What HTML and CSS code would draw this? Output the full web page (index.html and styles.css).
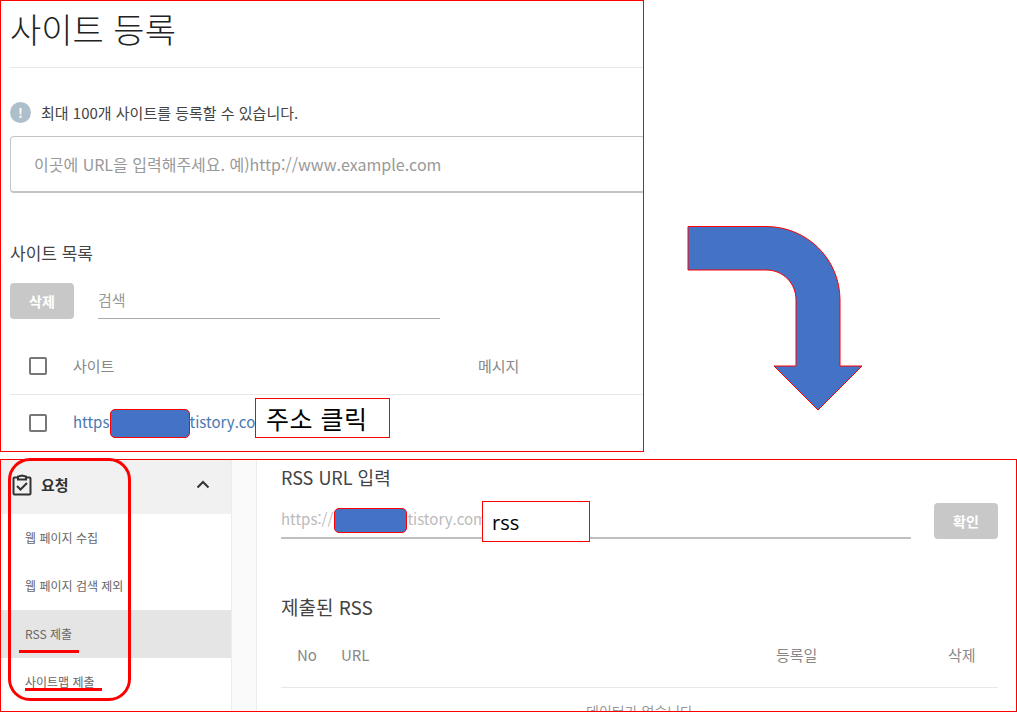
FILE: index.html
```html
<!DOCTYPE html>
<html lang="ko">
<head>
<meta charset="utf-8">
<title>RSS 제출 안내</title>
<link rel="stylesheet" href="styles.css">
</head>
<body>
<div class="sheet">
  <section class="site-panel">
    <h1 class="site-title">사이트 등록</h1>
    <div class="notice">
      <span class="notice-icon">!</span>
      <span>최대 100개 사이트를 등록할 수 있습니다.</span>
    </div>
    <div class="url-field">이곳에 URL을 입력해주세요. 예)http://www.example.com</div>
    <h2 class="list-title">사이트 목록</h2>
    <div class="list-tools">
      <button class="btn">삭제</button>
      <div class="search">검색</div>
    </div>
    <div class="site-row site-head">
      <span class="checkbox"></span>
      <span class="col-site">사이트</span>
      <span>메시지</span>
    </div>
    <div class="site-row site-item">
      <span class="checkbox"></span>
      <a class="site-link">https:<span class="redact redact-link"></span>tistory.com</a>
    </div>
    <div class="callout callout-click">주소 클릭</div>
  </section>

  <svg class="turn-arrow" width="180" height="190" viewBox="0 0 180 190">
    <path d="M1 1.500H79C120 1.500 153 34 153 75V141H175L131 185L87 141H109V75C109 58 96 45 79 45H1Z" fill="#4472c4" stroke="#f00" stroke-width="1"/>
  </svg>

  <section class="rss-panel">
    <nav class="side">
      <div class="side-head">
        <svg class="side-icon" width="20" height="22" viewBox="0 0 20 22">
          <path d="M6 3.500H2.500A1 1 0 0 0 1.500 4.500V19.500A1 1 0 0 0 2.500 20.500H17.500A1 1 0 0 0 18.500 19.500V4.500A1 1 0 0 0 17.500 3.500H14M6 5.500V2.500L10 1.500L14 2.500V5.500Z" fill="none" stroke="#333" stroke-width="2"/>
          <path d="M5 12L8.500 15.500L15 9" fill="none" stroke="#333" stroke-width="2"/>
        </svg>
        <span class="side-label">요청</span>
        <svg class="side-chevron" width="14" height="9" viewBox="0 0 14 9">
          <path d="M1.500 7.500L7 2L12.500 7.500" fill="none" stroke="#333" stroke-width="2"/>
        </svg>
      </div>
      <div class="side-item">웹 페이지 수집</div>
      <div class="side-item">웹 페이지 검색 제외</div>
      <div class="side-item side-item-on">RSS 제출</div>
      <div class="side-item">사이트맵 제출</div>
    </nav>
    <div class="gutter"></div>
    <main class="rss-main">
      <h2 class="rss-title">RSS URL 입력</h2>
      <div class="rss-form">
        <div class="rss-input">https://<span class="redact redact-url"></span>tistory.com/</div>
        <button class="btn">확인</button>
      </div>
      <h2 class="sent-title">제출된 RSS</h2>
      <div class="sent-head">
        <span class="col-no">No</span>
        <span class="col-url">URL</span>
        <span class="col-date">등록일</span>
        <span class="col-del">삭제</span>
      </div>
      <div class="sent-empty">데이터가 없습니다</div>
    </main>
  </section>

  <div class="callout callout-rss">rss</div>
  <div class="ring"></div>
  <div class="stroke stroke-rss"></div>
  <div class="stroke stroke-map"></div>
</div>
</body>
</html>
```
FILE: styles.css
```css
* { box-sizing: border-box; }

html, body { margin: 0; padding: 0; background: #fff; }

body {
  font-family: "Noto Sans CJK KR", "Noto Sans", sans-serif;
  color: #333;
}

.sheet {
  position: relative;
  width: 1017px;
  height: 712px;
  overflow: hidden;
}

h1, h2 { margin: 0; font-weight: 400; }

.btn {
  width: 64px;
  height: 36px;
  border: 0;
  border-radius: 4px;
  background: #c8c8c8;
  color: #fff;
  font: 700 14px/36px "Noto Sans CJK KR", sans-serif;
  padding: 0;
  flex: none;
}

.redact {
  display: inline-block;
  background: #4472c4;
  border: 1px solid #f00;
  border-radius: 5px;
  vertical-align: middle;
}

/* upper panel: site registration */
.site-panel {
  position: relative;
  width: 644px;
  height: 452px;
  border: 1px solid #f00;
  padding-left: 9px;
  overflow: hidden;
}

.site-title {
  height: 67px;
  border-bottom: 1px solid #e8e8e8;
  font-size: 34px;
  font-weight: 300;
  line-height: 56px;
  color: #222;
}

.notice {
  display: flex;
  align-items: center;
  gap: 10px;
  margin-top: 33px;
  height: 22px;
  font-size: 15px;
  color: #444;
}

.notice-icon {
  width: 21px;
  height: 21px;
  border-radius: 50%;
  background: #adbfca;
  color: #fff;
  font-size: 13px;
  font-weight: 700;
  line-height: 21px;
  text-align: center;
}

.url-field {
  height: 57px;
  margin-top: 13px;
  margin-right: -2px;
  padding-left: 23px;
  border: 1px solid #c4c4c4;
  border-bottom-width: 2px;
  border-radius: 4px;
  font-size: 16px;
  line-height: 54px;
  color: #999;
  white-space: nowrap;
}

.list-title {
  margin-top: 47px;
  font-size: 17px;
  line-height: 26px;
  color: #444;
}

.list-tools {
  display: flex;
  gap: 24px;
  margin-top: 17px;
}

.search {
  width: 342px;
  height: 36px;
  border-bottom: 1px solid #aaa;
  font-size: 15px;
  line-height: 34px;
  color: #999;
}

.site-row {
  display: flex;
  align-items: center;
  padding-left: 19px;
  font-size: 15px;
  color: #888;
}

.site-head {
  height: 76px;
  padding-top: 18px;
  border-bottom: 1px solid #e8e8e8;
}

.site-item { height: 56px; }

.checkbox {
  width: 18px;
  height: 18px;
  border: 2px solid #777;
  border-radius: 2px;
  margin-right: 26px;
}

.col-site { width: 405px; }

.site-link {
  color: #4a78b0;
  white-space: nowrap;
}

.redact-link {
  width: 80px;
  height: 29px;
  margin-left: -4px;
}

/* curved arrow between the two panels */
.turn-arrow {
  position: absolute;
  left: 687px;
  top: 225px;
}

/* lower panel: RSS submission */
.rss-panel {
  display: flex;
  width: 1017px;
  height: 253px;
  margin-top: 7px;
  border: 1px solid #f00;
  overflow: hidden;
}

.side {
  width: 230px;
  flex: none;
  font-size: 12px;
  color: #666;
}

.side-head {
  display: flex;
  align-items: center;
  height: 54px;
  padding: 0 21px 5px 11px;
  background: #f1f1f1;
  color: #333;
}

.side-label {
  flex: 1;
  margin-left: 9px;
  font-size: 15px;
  font-weight: 700;
}

.side-item {
  height: 48px;
  padding-left: 24px;
  line-height: 48px;
  white-space: nowrap;
}

.side-item:nth-child(2) { margin-top: 0; }

.side-item-on { background: #e5e5e5; }

.gutter {
  width: 26px;
  flex: none;
  background: #fafafa;
  border-left: 1px solid #ececec;
  border-right: 1px solid #ececec;
}

.rss-main {
  flex: 1;
  padding: 0 18px 0 24px;
}

.rss-title {
  font-size: 18px;
  line-height: 34px;
  color: #444;
}

.rss-form {
  display: flex;
  align-items: flex-end;
  justify-content: space-between;
  margin-top: 8px;
}

.rss-input {
  width: 630px;
  height: 37px;
  border-bottom: 2px solid #c0c0c0;
  font-size: 15px;
  line-height: 33px;
  color: #bbb;
  white-space: nowrap;
}

.redact-url {
  width: 73px;
  height: 25px;
  margin-left: 1px;
}

.sent-title {
  margin-top: 53px;
  font-size: 19px;
  line-height: 30px;
  color: #444;
}

.sent-head {
  position: relative;
  height: 66px;
  margin-top: 0;
  border-bottom: 1px solid #e8e8e8;
  display: flex;
  align-items: center;
  padding-top: 0;
  font-size: 15px;
  color: #888;
}

.col-no { margin-left: 16px; width: 44px; }
.col-url { width: 435px; }
.col-date { width: 172px; }

.sent-empty {
  margin-top: 13px;
  font-size: 14px;
  line-height: 20px;
  text-align: center;
  color: #999;
}

/* hand-drawn annotations over the screenshots */
.callout {
  position: absolute;
  border: 1px solid #f00;
  background: #fff;
  color: #000;
}

.callout-click {
  left: 254px;
  top: 397px;
  width: 135px;
  height: 40px;
  padding-left: 10px;
  font-size: 25px;
  line-height: 38px;
  letter-spacing: 0.5px;
}

.callout-rss {
  left: 482px;
  top: 501px;
  width: 108px;
  height: 41px;
  padding-left: 9px;
  font-family: "Open Sans", sans-serif;
  font-size: 20px;
  line-height: 41px;
}

.ring {
  position: absolute;
  left: 8px;
  top: 458px;
  width: 123px;
  height: 243px;
  border: 3px solid #f00;
  border-radius: 22px;
}

.stroke {
  position: absolute;
  height: 3px;
  background: #f00;
}

.stroke-rss { left: 19px; top: 650px; width: 60px; }
.stroke-map { left: 25px; top: 688px; width: 77px; }
```
